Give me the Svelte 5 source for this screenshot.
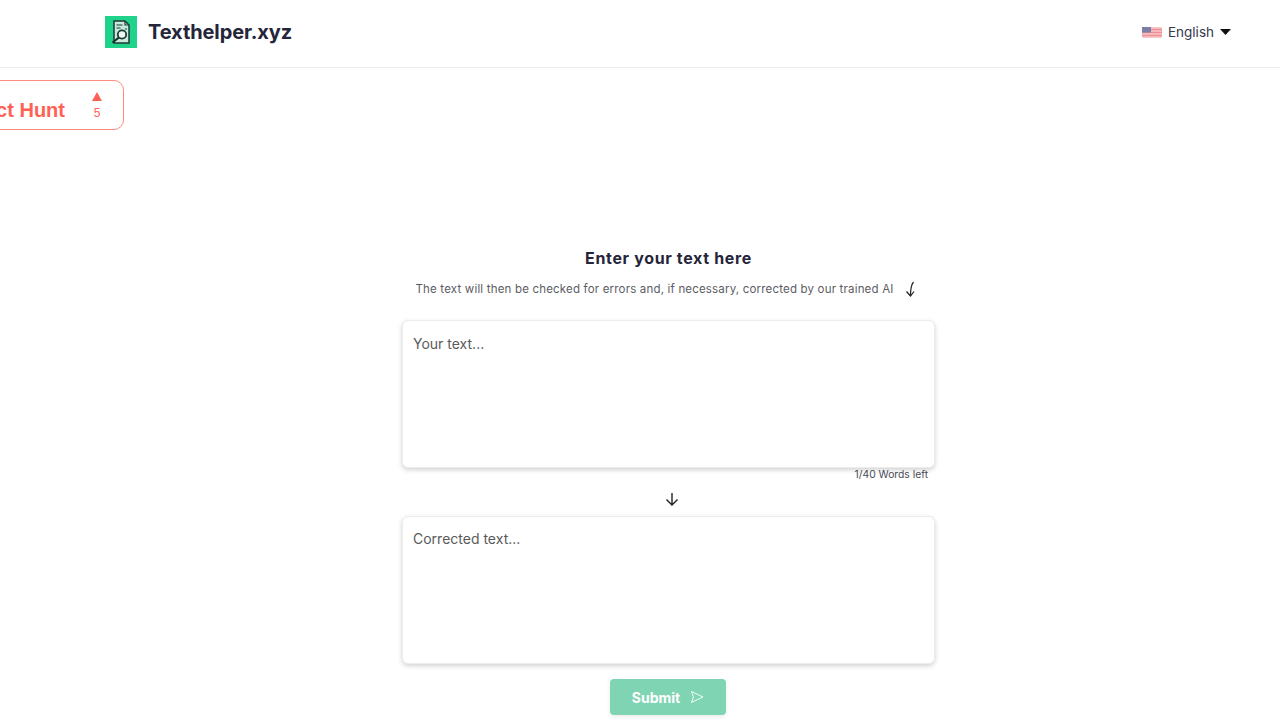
<script>
  let text = $state('');
  let corrected = $state('');
</script>

<div class="page">
  <header class="topbar">
    <div class="brand">
      <div class="logo">
        <svg viewBox="0 0 32 32" width="32" height="32" fill="none">
          <path d="M9 5h11l4 4v18H9z" fill="#c5ead9" stroke="#1d3a38" stroke-width="1.5" />
          <path d="M20 5v4h4" stroke="#1d3a38" stroke-width="1.2" />
          <path d="M11.5 9h6M11.5 12h4M20 13h2" stroke="#1d3a38" stroke-width="1.2" />
          <circle cx="17" cy="18.5" r="4.2" fill="#eef9f4" stroke="#1d3a38" stroke-width="1.8" />
          <path d="M14 21.5l-6.5 5" stroke="#14302e" stroke-width="2.2" />
        </svg>
      </div>
      <span class="name">Texthelper.xyz</span>
    </div>
    <div class="lang">
      <svg class="flag" viewBox="0 0 20 11" width="20" height="11">
        <rect width="20" height="11" rx="1" fill="#f6c6c8" />
        <path d="M0 2.5h20M0 5.5h20M0 8.5h20" stroke="#ee8f95" stroke-width="1.3" />
        <rect width="9" height="5.5" fill="#7b7fa6" />
      </svg>
      <span>English</span>
      <svg viewBox="0 0 11 6" width="11" height="6"><path d="M0 0h11L5.5 6z" fill="#111" /></svg>
    </div>
  </header>

  <a class="hunt" href="#top">
    <span class="hunt-label">Product Hunt</span>
    <span class="votes">
      <svg viewBox="0 0 10 9" width="10" height="9"><path d="M5 0l5 9H0z" fill="#ff6154" /></svg>
      <span class="count">5</span>
    </span>
  </a>

  <main class="form">
    <h1>Enter your text here</h1>
    <p class="hint">
      <span>The text will then be checked for errors and, if necessary, corrected by our trained AI</span>
      <svg viewBox="0 0 12 16" width="12" height="16" fill="none" stroke="#222" stroke-width="1.2">
        <path d="M9.5 1C7 4 6.5 10 6.5 15" />
        <path d="M2.5 10.5L6.5 15l3.5-4.5" />
      </svg>
    </p>

    <textarea class="box" placeholder="Your text..." bind:value={text}></textarea>
    <div class="left">1/40 Words left</div>

    <svg class="down" viewBox="0 0 16 16" width="16" height="16" fill="none" stroke="#222" stroke-width="1.4">
      <path d="M8 2v12M2.5 8.5L8 14l5.5-5.5" />
    </svg>

    <textarea class="box second" placeholder="Corrected text..." bind:value={corrected}></textarea>

    <button class="submit" type="button">
      Submit
      <svg viewBox="0 0 14 14" width="14" height="14" fill="none" stroke="#fff" stroke-width="0.9">
        <path d="M1.5 1.5L13 7 1.5 12.5 3.5 7z" />
      </svg>
    </button>
  </main>
</div>

<style>
  :global(body) {
    font-family: Inter, "Noto Sans", sans-serif;
    color: #2b2b3a;
    background: #fff;
    overflow: hidden;
  }

  .page {
    height: 720px;
    overflow: hidden;
  }

  .topbar {
    box-sizing: border-box;
    height: 68px;
    border-bottom: 1px solid #ececec;
    display: flex;
    align-items: center;
    justify-content: space-between;
    padding: 0 49px 3px 105px;
  }

  .brand {
    display: flex;
    align-items: center;
    gap: 11px;
  }

  .logo {
    width: 32px;
    height: 32px;
    background: #1fd38a;
  }

  .name {
    font-size: 20px;
    font-weight: 700;
    color: #25253a;
    letter-spacing: -0.1px;
  }

  .lang {
    display: flex;
    align-items: center;
    gap: 6px;
    font-size: 13.5px;
    color: #34384c;
  }

  .hunt {
    box-sizing: border-box;
    margin: 12px 0 0 -126px;
    width: 250px;
    height: 50px;
    display: flex;
    align-items: center;
    justify-content: flex-end;
    gap: 27px;
    padding-right: 21px;
    border: 1px solid #ff8a80;
    border-radius: 10px;
    color: #ff6154;
    text-decoration: none;
    font-family: "Liberation Sans", sans-serif;
  }

  .hunt-label {
    font-size: 20px;
    font-weight: 700;
    white-space: nowrap;
    padding-top: 10px;
  }

  .votes {
    display: flex;
    flex-direction: column;
    align-items: center;
    gap: 5px;
    padding-top: 2px;
    font-size: 12px;
  }

  .form {
    width: 533px;
    margin: 118px 0 0 402px;
    display: flex;
    flex-direction: column;
    align-items: center;
  }

  h1 {
    margin: 0;
    font-size: 16px;
    line-height: 20px;
    font-weight: 700;
    color: #25253a;
    letter-spacing: 0.65px;
  }

  .hint {
    margin: 11px 6px 0 0;
    height: 20px;
    display: flex;
    align-items: center;
    gap: 10px;
    font-size: 11.5px;
    letter-spacing: 0.18px;
    color: #5c5c64;
  }

  .box {
    box-sizing: border-box;
    width: 533px;
    height: 148px;
    padding: 14px 10px;
    border: 1px solid #ececec;
    border-radius: 6px;
    box-shadow: 0 2px 5px rgba(0, 0, 0, 0.18);
    resize: none;
    outline: none;
    font: 14px/18px Inter, "Noto Sans", sans-serif;
    color: #333;
    display: block;
  }

  .second {
    padding-top: 13px;
  }

  .hint + .box {
    margin-top: 21px;
  }

  .box::placeholder {
    color: #5a5a5a;
    opacity: 1;
  }

  .left {
    align-self: flex-end;
    margin: 0 7px 0 0;
    font-size: 10.3px;
    line-height: 13px;
    color: #4a4a55;
  }

  .down {
    margin: 10px 0 9px 6px;
  }

  .submit {
    margin: 15px 1px 0 0;
    width: 116px;
    height: 36px;
    border: 0;
    border-radius: 4px;
    background: #7fd4b4;
    color: #fff;
    font: 700 14px Inter, "Noto Sans", sans-serif;
    display: flex;
    align-items: center;
    justify-content: center;
    gap: 10px;
    box-shadow: 0 2px 5px rgba(0, 0, 0, 0.08);
  }
</style>
